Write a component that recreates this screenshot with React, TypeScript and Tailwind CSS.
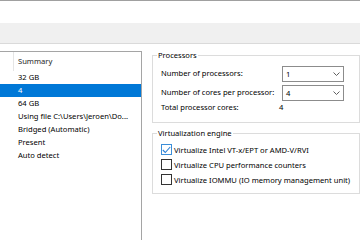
import type { ReactNode } from 'react';

const rows = [
  { text: '32 GB' },
  { text: '4', selected: true },
  { text: '64 GB' },
  { text: 'Using file C:\\Users\\Jeroen\\Do...' },
  { text: 'Bridged (Automatic)' },
  { text: 'Present' },
  { text: 'Auto detect' },
];

function Chevron() {
  return (
    <svg width="7" height="4" viewBox="0 0 7 4" className="shrink-0">
      <path d="M0.5 0.5 L3.5 3.5 L6.5 0.5" fill="none" stroke="#606060" strokeWidth="1" />
    </svg>
  );
}

function Select({ value }: { value: string }) {
  return (
    <div className="w-[62px] h-[16px] border border-[#8c8c8c] flex items-center justify-between pl-[3px] pr-[3px] leading-[14px]">
      <span>{value}</span>
      <Chevron />
    </div>
  );
}

function Checkbox({ checked, label }: { checked?: boolean; label: string }) {
  return (
    <div className="h-[15px] flex items-center whitespace-nowrap">
      <div
        className={`w-[11px] h-[11px] shrink-0 border flex items-center justify-center ${
          checked ? 'border-[#3c8ed8]' : 'border-[#333333]'
        }`}
      >
        {checked && (
          <svg width="9" height="8" viewBox="0 0 9 8">
            <path d="M0.8 4 L3.3 6.5 L8.2 1" fill="none" stroke="#2a7fd4" strokeWidth="1.1" />
          </svg>
        )}
      </div>
      <span className="ml-[2px] leading-[12px]">{label}</span>
    </div>
  );
}

function GroupBox({ title, className, children }: { title: string; className: string; children: ReactNode }) {
  return (
    <div className={`relative border border-[#dcdcdc] ${className}`}>
      <span className="absolute -top-[7px] left-[4px] px-[1px] bg-white leading-[12px]">{title}</span>
      {children}
    </div>
  );
}

export default function App() {
  return (
    <div className="w-[360px] h-[240px] overflow-hidden bg-white text-black text-[7.6px] font-['Segoe_UI','Noto_Sans',sans-serif] border-t border-[#a0a0a0]">
      <div className="h-[22px]" />
      <div className="h-[21px] bg-[#f0f0f0] border-b border-[#dadada]" />

      <div className="flex">
        {/* device list */}
        <div className="-ml-[1px] mt-[7px] w-[143px] h-[200px] border border-[#a5a5a5] shrink-0">
          <div className="h-[19px] flex items-center">
            <div className="w-[14px] h-full border-r border-[#e5e5e5]" />
            <span className="pl-[4px] text-[#1e1e1e]">Summary</span>
          </div>
          {rows.map((row) => (
            <div
              key={row.text}
              className={`h-[13px] pl-[18px] leading-[13px] whitespace-nowrap ${
                row.selected ? 'bg-[#0078d7] text-white' : ''
              }`}
            >
              {row.text}
            </div>
          ))}
        </div>

        {/* settings */}
        <div className="ml-[10px] mt-[11px] w-[208px] shrink-0">
          <GroupBox title="Processors" className="h-[68px] pt-[10px] pl-[8px]">
            <div className="flex items-center whitespace-nowrap">
              <span className="w-[121px]">Number of processors:</span>
              <Select value="1" />
            </div>
            <div className="flex items-center mt-[3px] whitespace-nowrap">
              <span className="w-[121px]">Number of cores per processor:</span>
              <Select value="4" />
            </div>
            <div className="flex items-center h-[14px] whitespace-nowrap">
              <span className="w-[118px]">Total processor cores:</span>
              <span>4</span>
            </div>
          </GroupBox>

          <GroupBox title="Virtualization engine" className="mt-[10px] h-[61px] pt-[8px] pl-[8px]">
            <Checkbox checked label="Virtualize Intel VT-x/EPT or AMD-V/RVI" />
            <Checkbox label="Virtualize CPU performance counters" />
            <Checkbox label="Virtualize IOMMU (IO memory management unit)" />
          </GroupBox>
        </div>
      </div>
    </div>
  );
}
